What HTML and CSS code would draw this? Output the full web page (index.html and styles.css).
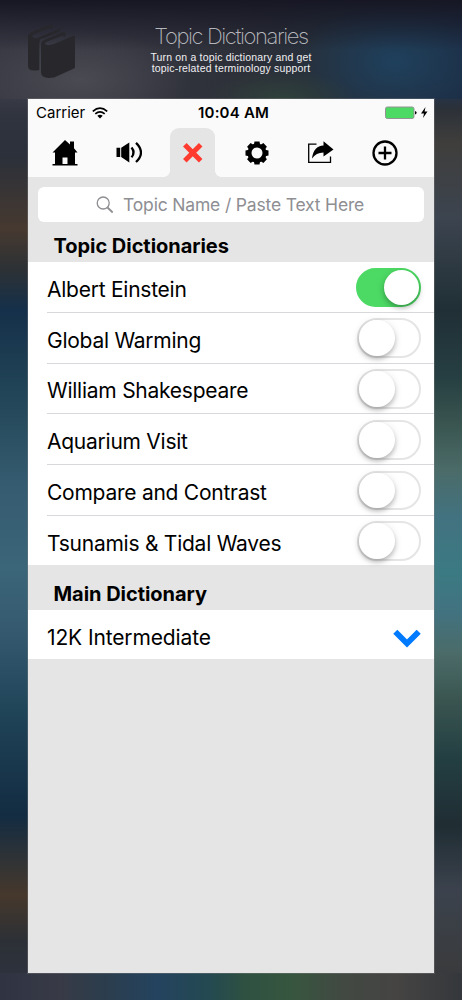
FILE: index.html
```
<!DOCTYPE html>
<html lang="en">
<head>
<meta charset="utf-8">
<title>Topic Dictionaries</title>
<link rel="stylesheet" href="styles.css">
</head>
<body>
<div class="page">
  <header class="banner">
    <svg class="books" width="49" height="56" viewBox="0 0 49 56">
      <path d="M3 8.500 L22 .5 Q24.500 0 24.500 2 L24.500 5 L22.800 5.500 L22.500 3.700 L5 10.500 Q3 12.500 6.500 14 L9.500 14 L31 5 Q33 4 33 5.500 L14 14 Q11.300 15.500 11.300 19 L11.300 46 Q0 48 0 42 L0 13 Q0 10 3 8.500Z"/>
      <path d="M16 16 L35 8 Q37.300 7.500 37.300 9.500 L37.300 12.500 L35.500 13 L35.300 11.300 L18 18 Q15.500 20 19 21 Q22 21.500 26 20 L45 12 Q47 11.300 47 13 L47 43 Q47 44 46 44.500 L26 53.500 Q13 55.500 13 48 L13 21 Q13 17.500 16 16Z"/>
      <path d="M14 14 L31 7" stroke="#27272c" stroke-width="1.500"/>
    </svg>
    <h1 class="title">Topic Dictionaries</h1>
    <p class="subtitle">Turn on a topic dictionary and get<br>topic-related terminology support</p>
  </header>
  <main class="phone">
    <div class="status">
      <span class="carrier">Carrier</span>
      <svg class="wifi" width="16" height="12" viewBox="0 0 16 12"><g fill="none" stroke="#000" stroke-width="1.7"><path d="M.8 4.300 Q8 -2 15.200 4.300"/><path d="M3.300 6.800 Q8 2.800 12.700 6.800"/></g><path d="M8 11.500 L5.300 8.800 Q8 6.800 10.700 8.800Z"/></svg>
      <span class="time">10:04 AM</span>
      <svg class="battery" width="44" height="14" viewBox="0 0 44 14"><rect x=".5" y="1" width="28.500" height="11.500" rx="1.800" fill="#4cd964" stroke="#939393"/><path d="M30 5 Q31.700 5.500 31.700 6.700 Q31.700 8 30 8.500Z"/><path d="M40.500 1 L36 7.500 L39 7.500 L38 12 L42.500 5.500 L39.600 5.500Z"/></svg>
    </div>
    <nav class="tabs">
      <span class="tab"><svg width="26" height="26" viewBox="0 0 26 26"><path d="M13 0 L18 4.600 L18 1.500 L22 1.500 L22 8.300 L25.500 12.500 L23 12.500 L23 24 L25.500 24 L25.500 25.500 L.5 25.500 L.5 24 L3 24 L3 12.500 L.5 12.500Z"/><path fill="#fafafa" d="M10.500 17.500h5v6.500h-5z"/></svg></span>
      <span class="tab"><svg width="26" height="26" viewBox="0 0 26 26"><path d="M.5 7.800h3.700v9.200H.500zM5.200 7.800 L13.300 2.500 V22.500 L5.200 17Z"/><g fill="none" stroke="#000" stroke-width="2.300"><path d="M15.500 7.500 Q19.700 12.500 15.500 17.300"/><path d="M20 2.800 Q25 7.500 25 12.500 Q25 17.500 20 22"/></g></svg></span>
      <span class="tab active"><svg width="22" height="22" viewBox="0 0 22 22"><path d="M2.800 2.800 L18.700 18.700 M18.700 2.800 L2.800 18.700" stroke="#ff3b30" stroke-width="5"/></svg></span>
      <span class="tab"><svg width="24" height="24" viewBox="-12 -12 24 24"><circle r="7.500" fill="none" stroke="#000" stroke-width="4"/><g><path id="pair" d="M-2.500 -11.500H2.500L3.200 -8H-3.200ZM-2.500 11.500H2.500L3.200 8H-3.200Z"/><use href="#pair" transform="rotate(45)"/><use href="#pair" transform="rotate(90)"/><use href="#pair" transform="rotate(135)"/></g></svg></span>
      <span class="tab"><svg width="26" height="26" viewBox="0 0 26 26"><path d="M8.500 4.200H.700V22.300H22.500V16.500" fill="none" stroke="#000" stroke-width="1.300"/><path d="M15.500 1.200 L25.500 9.500 L15.500 16.500 V12.500 Q8 12.500 4 18.500 Q5.500 6 15.500 5.500Z"/></svg></span>
      <span class="tab"><svg width="26" height="26" viewBox="0 0 26 26"><circle cx="13" cy="13" r="11.500" fill="none" stroke="#000" stroke-width="2.300"/><path d="M13 6.500V19.500M6.500 13H19.500" stroke="#000" stroke-width="2.300"/></svg></span>
    </nav>
    <div class="search">
      <svg width="18" height="18" viewBox="0 0 18 18" fill="none" stroke="#8e8e93"><circle cx="7.200" cy="7" r="6" stroke-width="1.300"/><path d="M11.500 11.500L16.700 16.500" stroke-width="1.800"/></svg>
      <span class="placeholder">Topic Name / Paste Text Here</span>
    </div>
    <h2 class="group first">Topic Dictionaries</h2>
    <ul class="list">
      <li class="row"><span>Albert Einstein</span><i class="switch on"></i></li>
      <li class="row"><span>Global Warming</span><i class="switch"></i></li>
      <li class="row"><span>William Shakespeare</span><i class="switch"></i></li>
      <li class="row"><span>Aquarium Visit</span><i class="switch"></i></li>
      <li class="row"><span>Compare and Contrast</span><i class="switch"></i></li>
      <li class="row"><span>Tsunamis &amp; Tidal Waves</span><i class="switch"></i></li>
    </ul>
    <h2 class="group second">Main Dictionary</h2>
    <div class="row main"><span>12K Intermediate</span><svg class="chevron" width="28" height="19" viewBox="0 0 28 19"><path d="M2.300 2.800 L14 14.500 L25.700 2.800" fill="none" stroke="#007aff" stroke-width="5.800"/></svg></div>
  </main>
</div>
</body>
</html>
```
FILE: styles.css
```
* { box-sizing: border-box; }
body { margin: 0; font-family: Inter, "Liberation Sans", sans-serif; color: #000; }
.page {
  position: relative; z-index: 0;
  width: 462px; height: 1000px; overflow: hidden;
  padding: 0 28px;
  background: linear-gradient(#1f2030 0, #3a3a45 40px, #41414c 80px, #30343f 115px, #2b303a 155px, #463930 229px, #2d3135 269px, #15304a 310px, #234758 401px, #355b70 482px, #3b6578 568px, #355a70 631px, #204458 711px, #132c42 815px, #46382c 895px, #2c3036 941px, #2f3342 1000px);
}
.page::before {
  content: ""; position: absolute; z-index: -1; top: 0; right: 0; bottom: 0; width: 231px;
  background: linear-gradient(#091525 0, #0f273b 30px, #1b3954 60px, #1d3356 82px, #2c3138 109px, #3f3e3c 143px, #3c444f 218px, #202f35 310px, #263f42 378px, #3a5550 424px, #4b6b68 470px, #42727f 516px, #3b7a82 573px, #42727f 614px, #4b6b68 654px, #3a5550 700px, #233f42 757px, #202d33 826px, #3b424d 890px, #3a3c3e 964px, #33343a 1000px);
}
.page::after {
  content: ""; position: absolute; z-index: -1; left: 0; right: 0; bottom: 0; height: 27px;
  background: linear-gradient(90deg, #2f3342 0, #383a46 13%, #2c3d4c 22%, #24435f 34%, #244951 45%, #2e5141 53%, #37563f 63%, #424842 75%, #454443 86%, #34373b 100%);
}
.banner { height: 99px; display: flex; flex-direction: column; align-items: center; text-align: center; padding-top: 22px; }
.banner::after {
  content: ""; position: absolute; z-index: -1; left: 0; top: 0; width: 462px; height: 99px;
  background:
    linear-gradient(#171724 0, #17172400 50px),
    radial-gradient(ellipse 110px 50px at 80px 80px, #4a4a52 0, #4a4a5200 100%),
    radial-gradient(ellipse 75px 30px at 280px 99px, #30413b 0, #30413b00 100%),
    radial-gradient(ellipse 95px 65px at 395px 62px, #1f405c 0, #1f405c00 100%),
    linear-gradient(90deg, #393944 0, #34353f 28%, #2c2f38 55%, #25303d 72%, #1c2d45 100%);
}
.books { position: absolute; left: 28px; top: 24px; fill: #27272c; }
.title { margin: 0; font-weight: 200; font-size: 22px; line-height: 28px; letter-spacing: -1.400px; color: #b5b6bb; }
.subtitle { margin: 2px 0 0; font: 10.500px/11px "Liberation Sans", Arial, sans-serif; letter-spacing: .17px; color: #f0f0f2; white-space: nowrap; }
.phone { width: 406px; height: 874px; background: #e5e5e5; box-shadow: 0 0 0 1px #8885; }
.status { height: 29px; background: #fafafa; display: flex; align-items: center; position: relative; padding: 0 5px 2px 8px; font-size: 15px; }
.wifi { margin-left: 7px; }
.time { position: absolute; left: 170px; font-weight: 600; letter-spacing: .2px; }
.battery { margin-left: auto; }
.tabs { height: 49px; background: #fafafa; display: flex; padding-left: 14px; gap: 19.200px; }
.tab { width: 45px; flex: none; display: flex; align-items: center; justify-content: center; position: relative; }
.active { background: #e5e5e5; border-radius: 9px 9px 0 0; }
.active::before, .active::after { content: ""; position: absolute; bottom: 0; width: 6px; height: 6px; }
.active::before { right: 100%; background: radial-gradient(circle at 0 0, #fafafa 5.500px, #e5e5e5 6px); }
.active::after { left: 100%; background: radial-gradient(circle at 100% 0, #fafafa 5.500px, #e5e5e5 6px); }
.search { height: 35px; margin: 10px 10px 0; background: #fff; border-radius: 6px; display: flex; align-items: center; gap: 9px; padding-left: 58px; }
.placeholder { font-size: 17.500px; color: #8e8e93; white-space: nowrap; letter-spacing: -.17px; padding-bottom: 1px; }
.group { margin: 0; font-size: 20px; line-height: 24px; font-weight: 700; letter-spacing: -.04px; padding-left: 25.500px; white-space: nowrap; }
.first { height: 40px; padding-top: 12px; }
.second { height: 44.500px; padding-top: 17px; }
.list { list-style: none; margin: 0; padding: 0; background: #fff; }
.row { height: 50.800px; display: flex; align-items: center; justify-content: space-between; margin-left: 19px; padding: 1px 13px 0 0; font-size: 21px; letter-spacing: -.25px; white-space: nowrap; border-bottom: 1px solid #d8d8dc; }
.row span { padding-top: 4px; }
.row:last-child { border-bottom: 0; height: 49.500px; }
.main.row { margin: 0; padding: 0 13px 0 19px; background: #fff; height: 49.500px; letter-spacing: -.12px; }
.main span { padding-top: 6px; }
.chevron { margin-top: 7px; }
.switch { width: 64px; height: 39.500px; border-radius: 20px; border: 2px solid #e5e5e5; background: #fff; display: flex; }
.switch::before { content: ""; width: 35.500px; height: 35.500px; border-radius: 50%; background: #fff; box-shadow: 0 3px 4px #0003, 0 2px 8px #0002; }
.on { background: #4cd964; border-color: #4cd964; justify-content: flex-end; width: 65px; }
```
